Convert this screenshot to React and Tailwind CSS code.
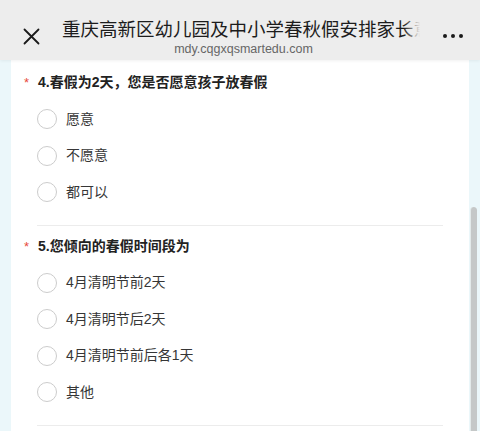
import React from "react";

const questions = [
  {
    title: "4.春假为2天，您是否愿意孩子放春假",
    options: ["愿意", "不愿意", "都可以"],
  },
  {
    title: "5.您倾向的春假时间段为",
    options: ["4月清明节前2天", "4月清明节后2天", "4月清明节前后各1天", "其他"],
  },
];

function Question({ q }) {
  return (
    <div className="px-[26px]">
      <div className="relative pt-[10px] flex items-center h-[30px] text-[14px] font-bold text-[#222] leading-[20px]">
        <span className="absolute left-[-13px] top-[11px] text-[13px] text-[#e84a3a] font-normal">*</span>
        <span className="pl-[1px]">{q.title}</span>
      </div>
      <div className="pt-[8.75px] pb-[14.5px]">
        {q.options.map((o) => (
          <div key={o} className="h-[36.5px] flex items-center gap-[9px]">
            <span className="w-[20px] h-[20px] rounded-full border border-[#cccccc] bg-white shrink-0" />
            <span className="text-[14px] text-[#363636]">{o}</span>
          </div>
        ))}
      </div>
      <div className="h-px bg-[#ececec]" />
    </div>
  );
}

export default function App() {
  return (
    <div
      className="relative w-[480px] h-[431px] overflow-hidden bg-[#ebf7fa]"
      style={{ fontFamily: '"Liberation Sans", "Noto Sans CJK SC", sans-serif' }}
    >
      <div className="relative z-10 h-[60px] bg-[#ededed] flex items-start shadow-[0_1px_3px_rgba(0,0,0,0.06)]">
        <div className="w-[62px] h-full flex items-center justify-center pt-[13px]">
          <svg width="17" height="17" viewBox="0 0 17 17" fill="none" stroke="#1a1a1a" strokeWidth="1.8" strokeLinecap="round">
            <path d="M1.5 1.5 L15.5 15.5 M15.5 1.5 L1.5 15.5" />
          </svg>
        </div>
        <div className="w-[358px] flex flex-col items-center pt-[19px]">
          <div className="relative w-full overflow-hidden whitespace-nowrap text-[18.5px] leading-[22px] text-[#1c1c1c]">
            重庆高新区幼儿园及中小学春秋假安排家长意见调查
            <div className="absolute right-0 top-0 h-full w-[16px] bg-gradient-to-r from-transparent to-[#ededed]" />
          </div>
          <div className="text-[12.5px] leading-[14px] text-[#666] mt-[1px] pl-[5px]">mdy.cqgxqsmartedu.com</div>
        </div>
        <div className="flex-1 h-full flex items-center justify-center gap-[4px] pt-[12px] pl-[6px]">
          <span className="w-[4px] h-[4px] rounded-full bg-[#1a1a1a]" />
          <span className="w-[4px] h-[4px] rounded-full bg-[#1a1a1a]" />
          <span className="w-[4px] h-[4px] rounded-full bg-[#1a1a1a]" />
        </div>
      </div>

      <div className="px-[11px]">
        <div className="w-[458px] bg-white pt-[2px]">
          {questions.map((q) => (
            <Question key={q.title} q={q} />
          ))}
          <div className="h-[40px]" />
        </div>
      </div>

      <div className="absolute right-[3px] top-[207px] w-[7px] h-[240px] rounded-t-full bg-[#c5c8c8] border-l border-[#e3eaea]" />
    </div>
  );
}
